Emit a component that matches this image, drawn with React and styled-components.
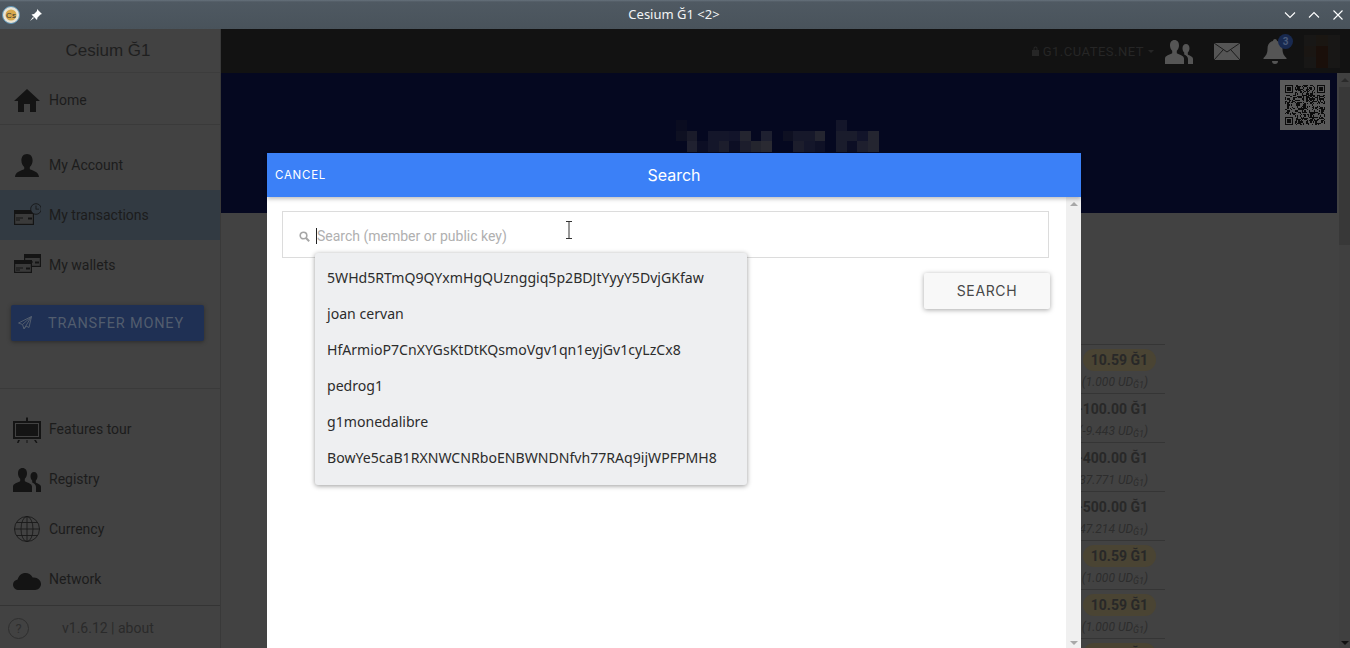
import React from "react";
import styled, { createGlobalStyle } from "styled-components";

const GlobalStyle = createGlobalStyle`
  html, body { margin: 0; height: 100%; overflow: hidden; background: #424242; }
  #root { height: 100%; }
  * { box-sizing: border-box; }
`;

const Page = styled.div`
  width: 1350px;
  height: 648px;
  display: flex;
  flex-direction: column;
  position: relative;
  overflow: hidden;
  font-family: Roboto, sans-serif;
`;

const TitleBar = styled.div`
  height: 29px;
  flex: none;
  display: flex;
  align-items: center;
  padding: 0 6px 0 2px;
  color: #fff;
  background: linear-gradient(#66727c 0, #4f5962 2px, #49535b 100%);
`;
const TitleLeft = styled.div`
  width: 120px;
  display: flex;
  align-items: center;
  gap: 9px;
`;
const TitleText = styled.div`
  flex: 1;
  text-align: center;
  font: 13px "Noto Sans", sans-serif;
  color: #f2f4f5;
  padding: 0 0 2px 2px;
`;
const TitleButtons = styled.div`
  width: 120px;
  display: flex;
  justify-content: flex-end;
  gap: 12px;
`;

const Shell = styled.div`
  flex: 1;
  display: flex;
  min-height: 0;
`;

const Sidebar = styled.nav`
  width: 221px;
  flex: none;
  display: flex;
  flex-direction: column;
  background: #424242;
  border-right: 1px solid #393939;
`;
const Brand = styled.div`
  height: 44px;
  display: flex;
  align-items: center;
  justify-content: center;
  font: 17px "Liberation Sans", sans-serif;
  color: #1f1f1f;
  border-bottom: 1px solid #3c3c3c;
  padding: 1px 4px 0 0;
`;
const NavItem = styled.div`
  height: ${(p) => p.$h || 50}px;
  display: flex;
  align-items: center;
  padding: ${(p) => p.$top || 0}px 0 0 13px;
  gap: 8px;
  font-size: 14px;
  color: #1c1c1c;
  background: ${(p) => (p.$active ? "#323a42" : "transparent")};
  border-bottom: ${(p) => (p.$line ? "1px solid #3a3a3a" : "none")};
`;
const NavIcon = styled.svg`
  width: 28px;
  height: 28px;
  flex: none;
  fill: ${(p) => p.$fill || "#141414"};
`;
const TransferWrap = styled.div`
  padding: 15px 16px 0 11px;
  height: 99px;
  border-bottom: 1px solid #3a3a3a;
  margin-bottom: 15px;
`;
const TransferButton = styled.div`
  height: 36px;
  display: flex;
  align-items: center;
  gap: 16px;
  padding-left: 7px;
  border-radius: 2px;
  background: #1f3054;
  color: #525d6e;
  font-size: 14.5px;
  letter-spacing: 0.8px;
  box-shadow: 0 1px 4px rgba(0, 0, 0, 0.35);
`;
const SideFooter = styled.div`
  margin-top: auto;
  height: 43px;
  border-top: 1px solid #343434;
  display: flex;
  align-items: center;
  padding: 2px 0 0 8px;
  color: #2a2a2a;
  font-size: 14px;
`;
const HelpCircle = styled.div`
  width: 21px;
  height: 21px;
  border: 1px solid #2e2e2e;
  border-radius: 50%;
  display: flex;
  align-items: center;
  justify-content: center;
  font-size: 13px;
  color: #2e2e2e;
`;
const Version = styled.div`
  margin-left: 33px;
`;

const Main = styled.main`
  flex: 1;
  min-width: 0;
  display: flex;
  flex-direction: column;
  position: relative;
`;
const TopBar = styled.div`
  height: 44px;
  flex: none;
  background: #121212;
  display: flex;
  align-items: center;
  justify-content: flex-end;
  padding-right: 10px;
`;
const NodeLabel = styled.div`
  display: flex;
  align-items: center;
  gap: 3px;
  font-size: 13px;
  letter-spacing: 0.5px;
  color: #262626;
  margin-right: 10px;
`;
const Caret = styled.span`
  width: 0;
  height: 0;
  border-left: 3px solid transparent;
  border-right: 3px solid transparent;
  border-top: 3px solid #262626;
  margin-left: 1px;
`;
const TopIcon = styled.div`
  width: 30px;
  height: 30px;
  margin-right: ${(p) => p.$gap || 0}px;
  position: relative;
  display: flex;
  align-items: center;
  justify-content: center;
`;
const BellBadge = styled.span`
  position: absolute;
  top: -2px;
  right: -3px;
  width: 15px;
  height: 15px;
  border-radius: 50%;
  background: #18294f;
  color: #4a5a78;
  font-size: 10px;
  font-weight: 700;
  line-height: 15px;
  text-align: center;
`;
const Content = styled.div`
  flex: 1;
  min-height: 0;
  display: flex;
`;
const ContentColumn = styled.div`
  flex: 1;
  min-width: 0;
  display: flex;
  flex-direction: column;
`;
const Banner = styled.div`
  height: 140px;
  flex: none;
  background: #050820;
  display: flex;
  justify-content: flex-end;
  padding: 7px 7px 0 0;
  position: relative;
`;
const QrBox = styled.div`
  width: 50px;
  height: 50px;
  background: #5a5a5a;
  padding: 5px;
`;
const Blur = styled.svg`
  position: absolute;
  left: 455px;
  top: 47px;
`;
const List = styled.div`
  width: 944px;
  padding-top: 131px;
  display: flex;
  flex-direction: column;
  align-items: flex-end;
`;
const Row = styled.div`
  width: 600px;
  height: 49px;
  border-top: 1px solid #353535;
  padding: 4px 17px 0 0;
  display: flex;
  flex-direction: column;
  align-items: flex-end;
`;
const Amount = styled.div`
  font-size: 14px;
  font-weight: 700;
  line-height: 22px;
  color: #282828;
  border-radius: 12px;
  padding: ${(p) => (p.$gold ? "0 8px" : "0")};
  margin-right: ${(p) => (p.$gold ? "-8px" : "0")};
  background: ${(p) => (p.$gold ? "#4a4433" : "transparent")};
`;
const Relative = styled.div`
  font-size: 12px;
  font-style: italic;
  line-height: 18px;
  margin-top: 2px;
  color: #2d2d2d;
  sub {
    font-size: 9px;
    vertical-align: -2px;
    line-height: 0;
  }
`;
const PageScroll = styled.div`
  width: 13px;
  flex: none;
  background: #404040;
  border-left: 2px solid #424242;
  display: flex;
  flex-direction: column;
  align-items: center;
  position: relative;
`;
const ScrollThumb = styled.div`
  width: 100%;
  height: 158px;
  margin-top: 14px;
  background: #383838;
`;
const Arrow = styled.span`
  width: 0;
  height: 0;
  border-left: 4px solid transparent;
  border-right: 4px solid transparent;
  ${(p) =>
    p.$down
      ? `border-top: 4px solid ${p.$c}; margin-top: auto; margin-bottom: 3px;`
      : `border-bottom: 4px solid ${p.$c}; position: absolute; top: 5px;`}
`;

const Modal = styled.section`
  position: absolute;
  left: 46px;
  top: 124px;
  width: 814px;
  height: 495px;
  background: #fff;
  display: flex;
  flex-direction: column;
`;
const ModalHeader = styled.header`
  height: 44px;
  flex: none;
  background: #3b80f7;
  color: #fff;
  display: flex;
  align-items: center;
  padding: 0 8px;
  position: relative;
  box-shadow: 0 2px 4px rgba(0, 0, 0, 0.25);
  z-index: 1;
`;
const CancelButton = styled.div`
  font: 11.5px Inter, sans-serif;
  letter-spacing: 0.75px;
`;
const ModalTitle = styled.div`
  position: absolute;
  left: 0;
  right: 0;
  text-align: center;
  font: 16px Inter, "Liberation Sans", sans-serif;
`;
const ModalBody = styled.div`
  flex: 1;
  display: flex;
  min-height: 0;
`;
const Form = styled.div`
  flex: 1;
  min-width: 0;
  padding: 14px 17px 0 15px;
  position: relative;
`;
const SearchField = styled.div`
  height: 47px;
  border: 1px solid #dcdcdc;
  display: flex;
  align-items: center;
  padding: 3px 0 0 16px;
  gap: 6px;
  font-size: 14px;
  color: #b0b0b0;
`;
const Placeholder = styled.span`
  border-left: 1px solid #222;
  line-height: 16px;
  height: 16px;
  display: flex;
  align-items: center;
`;
const Actions = styled.div`
  display: flex;
  justify-content: flex-end;
  margin: 15px -1px 0 0;
`;
const SearchButton = styled.div`
  width: 126px;
  height: 36px;
  display: flex;
  align-items: center;
  justify-content: center;
  padding-bottom: 1px;
  border-radius: 2px;
  background: #f8f8f8;
  color: #484848;
  font: 14px Inter, sans-serif;
  letter-spacing: 0.65px;
  box-shadow: 0 1px 5px rgba(0, 0, 0, 0.35);
`;
const Suggestions = styled.ul`
  position: absolute;
  left: 48px;
  top: 56px;
  width: 432px;
  margin: 0;
  padding: 6px 0 10px;
  list-style: none;
  background: #eeeff1;
  border-radius: 3px;
  box-shadow: 0 1px 5px rgba(0, 0, 0, 0.4);
`;
const Suggestion = styled.li`
  height: 36px;
  display: flex;
  align-items: center;
  padding-left: 12px;
  font: 14.1px "Noto Sans", sans-serif;
  color: #2c2c2c;
`;
const ModalScroll = styled.div`
  width: 15px;
  flex: none;
  background: #f0f0f0;
  display: flex;
  flex-direction: column;
  align-items: center;
  position: relative;
`;
const TextCursor = styled.svg`
  position: absolute;
  left: 298px;
  top: 24px;
`;

const Card = ({ x, y, w, h }) => (
  <>
    <rect x={x + 0.6} y={y + 0.6} width={w - 1.2} height={h - 1.2} fill="#3a3a3a" stroke="#141414" strokeWidth="1.200" />
    <rect x={x} y={y} width={w} height={4} fill="#141414" />
    <rect x={x + 2} y={y + 7.500} width={7} height={1} fill="#141414" />
    <rect x={x + 2} y={y + 9.500} width={4} height={1} fill="#141414" />
    <rect x={x + w - 6} y={y + 7.500} width={4} height={2} fill="#141414" />
  </>
);

const nav = {
  home: <path d="M14 3 1 15h4v11h6v-8h6v8h6V15h4z" />,
  account: (
    <path d="M14 3c-3.600 0-5.600 2.800-5.600 6.400 0 2.800 1.200 5.200 2.800 6.600v2.200c-3 1.400-9 2.400-9.200 7.800h24c-.2-5.400-6.200-6.400-9.200-7.800V16c1.600-1.400 2.800-3.800 2.800-6.600C19.600 5.800 17.600 3 14 3z" />
  ),
  transactions: (
    <>
      <Card x={1} y={9} w={20} h={15} />
      <circle cx="23" cy="8" r="5.300" fill="#323a42" stroke="#141414" strokeWidth="0.800" />
      <path d="M22.600 4.500h.8v3.300h2.600v.8h-3.400z" />
    </>
  ),
  wallets: (
    <>
      <Card x={11} y={3} w={17} h={13} />
      <Card x={1} y={9} w={18} h={13} />
    </>
  ),
  tour: (
    <>
      <path d="M0 6h28v18H0zM2 8v14h24V8z" fillRule="evenodd" />
      <path d="M3 9h22v12H3zM13 3l1-1 1 1v3h-2zM5 25h2l-1.500 3h-1.500zM13.500 25h1v3h-1zM21 25h2l1.500 3H23z" />
    </>
  ),
  registry: (
    <path d="M9.500 3c-3 0-4.500 2.400-4.500 5.400 0 2.200.9 4.200 2.200 5.400v2.400C4.800 17.600 0 18.400 0 21.500V27h19v-5.500c0-3.100-4.800-3.900-7.200-5.300v-2.400c1.300-1.200 2.200-3.200 2.200-5.400C14 5.400 12.500 3 9.500 3zM21 7c-2.200 0-3.500 1.900-3.500 4.300 0 1.700.7 3.300 1.700 4.200v2c1.900 1.100 3.800 2.200 3.800 4.500V27h5v-5c0-2.500-3.600-3.200-5.200-4.400v-2.100c1-.9 1.700-2.500 1.700-4.200C24.500 8.900 23.200 7 21 7z" />
  ),
  network: (
    <path d="M6 25c-3.300 0-6-2.400-6-5.300 0-2.600 2-4.700 4.600-5.200C5.600 10.700 8.600 8 12.500 8c3.200 0 6 1.900 7.200 4.600 4.700-.6 8.300 2.800 8.300 6.500 0 3.300-2.700 5.900-6 5.900z" />
  ),
};

const Globe = () => (
  <NavIcon viewBox="0 0 28 28" $fill="none">
    <g stroke="#1a1a1a" strokeWidth="0.9" fill="none">
      <circle cx="14" cy="14" r="12.500" />
      <ellipse cx="14" cy="14" rx="6" ry="12.500" />
      <path d="M14 1.500v25M1.500 14h25M3.500 7.500h21M3.500 20.500h21" />
    </g>
  </NavIcon>
);

const Icon = ({ name }) => <NavIcon viewBox="0 0 28 28">{nav[name]}</NavIcon>;

// deterministic noise for the qr code
const qrCells = () => {
  const cells = [];
  const size = 33;
  const finder = (x, y, ox, oy) => {
    const dx = x - ox;
    const dy = y - oy;
    if (dx < 0 || dy < 0 || dx > 6 || dy > 6) return null;
    return dx === 0 || dy === 0 || dx === 6 || dy === 6 || (dx > 1 && dx < 5 && dy > 1 && dy < 5);
  };
  let seed = 1337;
  for (let y = 0; y < size; y++) {
    for (let x = 0; x < size; x++) {
      seed = (seed * 16807) % 2147483647;
      let on = seed % 100 < 48;
      const f = finder(x, y, 0, 0) ?? finder(x, y, size - 7, 0) ?? finder(x, y, 0, size - 7);
      if (f !== null) on = f;
      else if ((x < 8 && y < 8) || (x > size - 9 && y < 8) || (x < 8 && y > size - 9)) on = false;
      if (on) cells.push([x, y]);
    }
  }
  return cells;
};

const QrCode = () => (
  <svg width="40" height="40" viewBox="0 0 33 33" shapeRendering="crispEdges">
    {qrCells().map(([x, y]) => (
      <rect key={`${x}-${y}`} x={x} y={y} width="1" height="1" fill="#0b0b0b" />
    ))}
  </svg>
);

// pixelated title in the banner, one string per row of blocks
const blurRows = [
  { 0: "#0a0c20", 15: "#14162a" },
  { 0: "#0e1022", 1: "#1a1b2a", 3: "#14162a", 4: "#14162a", 5: "#12142a", 6: "#242530", 8: "#1e2030", 10: "#0e1022", 11: "#16182a", 12: "#16182a", 13: "#242530", 15: "#1a1c2c", 16: "#1a1c2c", 17: "#12142a", 18: "#242530" },
  { 1: "#202130", 2: "#0c0e24", 3: "#14162a", 4: "#1c1d2c", 5: "#0c0e24", 6: "#1c1d2c", 7: "#24252e", 8: "#2a2a32", 11: "#1c1d2c", 12: "#14162a", 13: "#0f1126", 15: "#1a1c2c", 16: "#0c0e24", 17: "#1e1f2e", 18: "#242530" },
];

const BlurredName = () => (
  <Blur width="204" height="33" viewBox="0 0 204 33" shapeRendering="crispEdges">
    {blurRows.map((row, r) =>
      Object.entries(row).map(([c, fill]) => (
        <rect key={`${r}-${c}`} x={c * 10.67} y={r * 10.67} width="10.67" height="10.67" fill={fill} />
      ))
    )}
  </Blur>
);

const rows = [
  { value: "10.59 Ğ1", rel: "(1.000 UD", gold: true },
  { value: "-100.00 Ğ1", rel: "(-9.443 UD" },
  { value: "-400.00 Ğ1", rel: "(-37.771 UD" },
  { value: "-500.00 Ğ1", rel: "(-47.214 UD" },
  { value: "10.59 Ğ1", rel: "(1.000 UD", gold: true },
  { value: "10.59 Ğ1", rel: "(1.000 UD", gold: true },
  { value: "10.59 Ğ1", rel: "", gold: true },
];

const suggestions = [
  "5WHd5RTmQ9QYxmHgQUznggiq5p2BDJtYyyY5DvjGKfaw",
  "joan cervan",
  "HfArmioP7CnXYGsKtDtKQsmoVgv1qn1eyjGv1cyLzCx8",
  "pedrog1",
  "g1monedalibre",
  "BowYe5caB1RXNWCNRboENBWNDNfvh77RAq9ijWPFPMH8",
];

export default function App() {
  return (
    <Page>
      <GlobalStyle />
      <TitleBar>
        <TitleLeft>
          <svg width="18" height="18" viewBox="0 0 18 18">
            <circle cx="9" cy="9" r="8.500" fill="#e8e4d6" stroke="#5b93b8" />
            <circle cx="9" cy="9" r="5.500" fill="#d8a94c" />
            <text x="9" y="12" fontSize="8" textAnchor="middle" fill="#333" fontFamily="Liberation Sans">Cs</text>
          </svg>
          <svg width="14" height="14" viewBox="0 0 14 14">
            <path d="M8 1l5 5-1.500.5-3 3-.5 2.500L2.500 6.500l2.500-.5 3-3zM4 9l-3 4 4-3z" fill="#fff" />
          </svg>
        </TitleLeft>
        <TitleText>Cesium Ğ1 &lt;2&gt;</TitleText>
        <TitleButtons>
          <svg width="12" height="12" viewBox="0 0 12 12" fill="none" stroke="#fff" strokeWidth="1.100">
            <path d="M1 3.500 6 8.500 11 3.500" />
          </svg>
          <svg width="12" height="12" viewBox="0 0 12 12" fill="none" stroke="#fff" strokeWidth="1.100">
            <path d="M1 8.500 6 3.500 11 8.500" />
          </svg>
          <svg width="12" height="12" viewBox="0 0 12 12" fill="none" stroke="#fff" strokeWidth="1.100">
            <path d="M1.500 1.500l9 9M10.500 1.500l-9 9" />
          </svg>
        </TitleButtons>
      </TitleBar>
      <Shell>
        <Sidebar>
          <Brand>Cesium Ğ1</Brand>
          <NavItem $h={52} $top={3} $line><Icon name="home" />Home</NavItem>
          <NavItem $h={65} $top={15}><Icon name="account" />My Account</NavItem>
          <NavItem $active><Icon name="transactions" />My transactions</NavItem>
          <NavItem><Icon name="wallets" />My wallets</NavItem>
          <TransferWrap>
            <TransferButton>
              <svg width="14" height="14" viewBox="0 0 14 14" fill="none" stroke="#525d6e" strokeWidth="1">
                <path d="M13.500.5.500 7l4 1.500L6 13l2-3 3 1.500zM13.500.500 4.500 8.500M13.500.500 6 13" />
              </svg>
              TRANSFER MONEY
            </TransferButton>
          </TransferWrap>
          <NavItem><Icon name="tour" />Features tour</NavItem>
          <NavItem><Icon name="registry" />Registry</NavItem>
          <NavItem><Globe />Currency</NavItem>
          <NavItem><Icon name="network" />Network</NavItem>
          <SideFooter>
            <HelpCircle>?</HelpCircle>
            <Version>v1.6.12 | about</Version>
          </SideFooter>
        </Sidebar>
        <Main>
          <TopBar>
            <NodeLabel>
              <svg width="9" height="10" viewBox="0 0 9 10">
                <path d="M1 4h7v6H1zM2.500 4V2.500a2 2 0 0 1 4 0V4h-1V2.500a1 1 0 0 0-2 0V4z" fill="#262626" />
              </svg>
              G1.CUATES.NET
              <Caret />
            </NodeLabel>
            <TopIcon $gap={18}>
              <NavIcon viewBox="0 0 28 28" $fill="#555">{nav.registry}</NavIcon>
            </TopIcon>
            <TopIcon $gap={18}>
              <svg width="26" height="17" viewBox="0 0 26 17">
                <path d="M0 0h26v17H0z" fill="#555" />
                <path d="M0 0l13 9L26 0M0 17l9-10M26 17l-9-10" fill="none" stroke="#1c1c1c" />
              </svg>
            </TopIcon>
            <TopIcon $gap={14}>
              <svg width="24" height="27" viewBox="0 0 24 27">
                <path d="M12 1c1 0 2 .8 2 2 4 1 5.500 4 5.500 8 0 5 2 7 4 9v1H.5v-1c2-2 4-4 4-9 0-4 1.500-7 5.500-8 0-1.200 1-2 2-2zM9 23h6c0 2-1 3-3 3s-3-1-3-3z" fill="#555" />
              </svg>
              <BellBadge>3</BellBadge>
            </TopIcon>
            <svg width="36" height="33" viewBox="0 0 36 33" shapeRendering="crispEdges">
              <path d="M0 0h36v33H0z" fill="#181716" />
              <path d="M12 0h12v11H12z" fill="#1a1612" />
              <path d="M12 11h12v22H12z" fill="#1a0f0a" />
              <path d="M0 11h12v11H0z" fill="#1a1613" />
            </svg>
          </TopBar>
          <Content>
            <ContentColumn>
              <Banner>
                <BlurredName />
                <QrBox><QrCode /></QrBox>
              </Banner>
              <List>
                {rows.map((row, i) => (
                  <Row key={i}>
                    <Amount $gold={row.gold}>{row.value}</Amount>
                    {row.rel && <Relative>{row.rel}<sub>Ğ1</sub>)</Relative>}
                  </Row>
                ))}
              </List>
            </ContentColumn>
            <PageScroll>
              <Arrow $c="#2a2a2a" />
              <ScrollThumb />
              <Arrow $down $c="#111" />
            </PageScroll>
          </Content>
          <Modal>
            <ModalHeader>
              <CancelButton>CANCEL</CancelButton>
              <ModalTitle>Search</ModalTitle>
            </ModalHeader>
            <ModalBody>
              <Form>
                <SearchField>
                  <svg width="11" height="11" viewBox="0 0 11 11" fill="none" stroke="#a6a6a6">
                    <circle cx="4.500" cy="4.500" r="3.300" strokeWidth="1.600" />
                    <path d="M7 7l3.200 3.200" strokeWidth="2" />
                  </svg>
                  <Placeholder>Search (member or public key)</Placeholder>
                </SearchField>
                <Actions>
                  <SearchButton>SEARCH</SearchButton>
                </Actions>
                <Suggestions>
                  {suggestions.map((s) => <Suggestion key={s}>{s}</Suggestion>)}
                </Suggestions>
                <TextCursor width="8" height="18" viewBox="0 0 8 18" fill="none" stroke="#333">
                  <path d="M1 .5h6M4 .5v17M1 17.500h6" />
                </TextCursor>
              </Form>
              <ModalScroll>
                <Arrow $c="#a8a8a8" />
                <Arrow $down $c="#a8a8a8" />
              </ModalScroll>
            </ModalBody>
          </Modal>
        </Main>
      </Shell>
    </Page>
  );
}
